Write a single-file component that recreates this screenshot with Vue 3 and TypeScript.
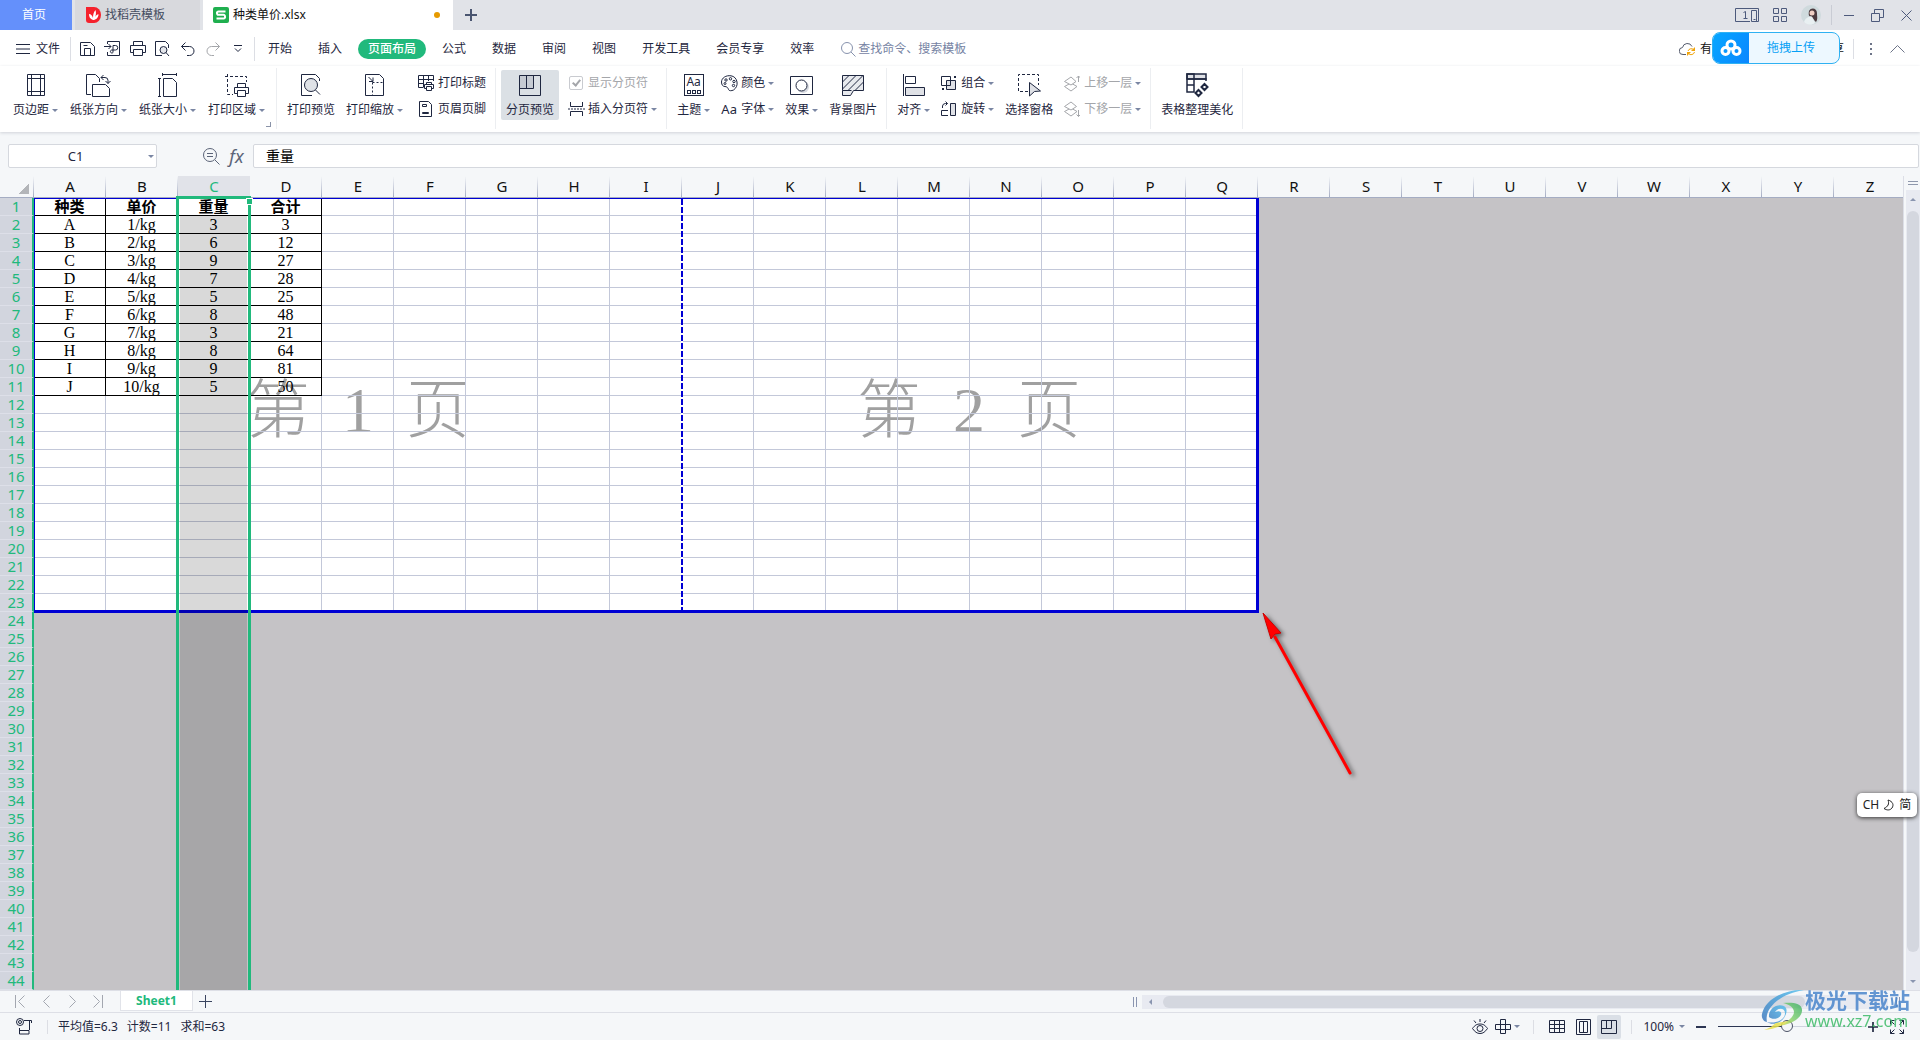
<script setup lang="ts">
import { h, ref } from 'vue'

interface IconDef { w: number; h: number; d: string }

const icons: Record<string, IconDef> = {
  docer: { w: 15, h: 16, d: '<path fill="#f5222d" stroke="none" d="M0 0h8a7 8 0 0 1 0 16H3a3 3 0 0 1-3-3z"/><path fill="#fff" stroke="none" d="M7 13C4 12 3 10 3 7c2 0 3.500 2 4 4 0-3 .5-6 2.500-8 .8 3 .5 5-.5 7 .8-1.500 2-2.500 3.500-2.800C12.500 10.500 10 13 7 13z"/>' },
  wps: { w: 16, h: 16, d: '<rect width="16" height="16" rx="2" fill="#1faf4f" stroke="none"/><path stroke="#fff" stroke-width="2" d="M12.500 4.500H5.500a1.500 1.500 0 0 0-1.500 1.500v0a1.500 1.500 0 0 0 1.500 1.800h5A1.500 1.500 0 0 1 12 9.500v0a1.500 1.500 0 0 1-1.500 2H3.500"/>' },
  plusBold: { w: 12, h: 12, d: '<path stroke-width="2" d="M6 0v12M0 6h12"/>' },
  plus: { w: 13, h: 13, d: '<path d="M6.500 0v13M0 6.500h13"/>' },
  devices: { w: 24, h: 14, d: '<path d="M15 13.500H.5V.5h23v13h-7v-11h5v11M8.500 10.500h4M10.500 10.500v-7l-2 1M18.500 11.500h2"/>' },
  tiles: { w: 14, h: 14, d: '<path d="M.5.5h5v5h-5zM8.500.5h5v5h-5zM.5 8.500h5v5h-5zM8.500 8.500h5v5h-5z"/>' },
  avatar: { w: 20, h: 20, d: '<circle cx="10" cy="10" r="10" fill="#cfdadd" stroke="none"/><path fill="#4b3a3e" stroke="none" d="M8 6c2-4 8-3 8 2 0 4 1 6-1 9-2-1-3-5-5-6-1 1-3 0-2-5z"/><circle cx="11" cy="8" r="2.500" fill="#efcfc4" stroke="none"/><path fill="#e9f0f2" stroke="none" d="M3 17c1-4 5-6 8-5l3 6c-4 3-8 2-11-1z"/>' },
  minimize: { w: 10, h: 12, d: '<path d="M0 6.500h10"/>' },
  restore: { w: 13, h: 13, d: '<path d="M.5 4.500h8v8h-8zM3.500 4V.5h9v8H9"/>' },
  close: { w: 11, h: 11, d: '<path d="M.5.5l10 10M10.500.5l-10 10"/>' },
  menu: { w: 14, h: 10, d: '<path d="M0 .5h14M0 5h14M0 9.500h14"/>' },
  save: { w: 16, h: 16, d: '<path d="M.5 1.500h10l4 4v9H.5zM4.500 14.500v-7h6v7M3.500 4.500h4"/>' },
  exportPdf: { w: 17, h: 16, d: '<path d="M3.500 3V.5h12v14h-12V11M0 5.500h7M4.500 3L7 5.500 4.500 8M9 11.500V4.500h2.500a2 2 0 0 1 0 4.500H8a1.500 1.500 0 1 0 1 2.500"/>' },
  print: { w: 16, h: 16, d: '<path d="M3.500 4.500v-4h9v4M3 11.500H.5v-7h15v7H13M3.500 8.500h9v6h-9z"/>' },
  preview: { w: 15, h: 16, d: '<path d="M13.500 7V3.500l-3-3h-10v14H7"/><circle cx="8.500" cy="9" r="3.500" fill="#e3e5ea"/><path d="M11 11.500l3 3.500"/>' },
  undo: { w: 14, h: 14, d: '<path d="M4.500.5L.5 4.500l4 4M.5 4.500h8a4.500 4.500 0 0 1 0 9H6"/>' },
  redo: { w: 14, h: 14, d: '<path d="M9.500.5l4 4-4 4M13.500 4.500h-8a4.500 4.500 0 0 0 0 9H8"/>' },
  more: { w: 8, h: 8, d: '<path d="M0 .5h8M1 3.500l3 3 3-3"/>' },
  search: { w: 15, h: 15, d: '<circle cx="6" cy="6" r="5.500"/><path d="M10 10l4.500 4.500"/>' },
  cloud: { w: 17, h: 14, d: '<path d="M7 12.500H4a3.500 3.500 0 0 1-.5-7 5 5 0 0 1 9.500-1" stroke="#555c6e"/><path stroke="#f0a30a" d="M9 9a3.500 3.500 0 0 1 6-1M15.500 10a3.500 3.500 0 0 1-6 1.500"/><path fill="#f0a30a" stroke="none" d="M16 5v4h-4zM8 14v-4h4z"/>' },
  netdisk: { w: 22, h: 18, d: '<g stroke="#fff" stroke-width="3"><circle cx="11" cy="6" r="4"/><circle cx="5.500" cy="12" r="3.500"/><circle cx="16.500" cy="12" r="3.500"/></g>' },
  dots: { w: 3, h: 12, d: '<path fill="currentColor" stroke="none" d="M0 0h2v2H0zM0 5h2v2H0zM0 10h2v2H0z"/>' },
  chevron: { w: 15, h: 8, d: '<path d="M.5 7.500l7-7 7 7"/>' },
  margins: { w: 18, h: 24, d: '<path d="M.5 1.500h17v21H.5zM4.500 1.500v21M13.500 1.500v21M.5 5.500h17M.5 18.500h17"/>' },
  orientation: { w: 25, h: 24, d: '<path d="M5 21.500H.5v-20h9l4 4V9M6.500 11.500h13l4 4v8h-17zM15 4.500h4a3 3 0 0 1 3 3v3M17.500 2L15 4.500 17.500 7M19.500 8l2.500 2.500L24.500 8"/>' },
  size: { w: 21, h: 24, d: '<path d="M2.500 5.500v18M1 5.500h3M1 23.500h3M5.500 1.500h14M5.500 0v3M19.500 0v3M6.500 5.500h9l4 4v14h-13z"/>' },
  printArea: { w: 24, h: 24, d: '<path stroke-dasharray="3 2" d="M0 3.500h21.500V9M2.500 1v20.500H8"/><path d="M12.500 14v-3.500h8V14M12 20.500H9.500v-6h14v6H21M12.500 17.500h8v6h-8z"/>' },
  bigPreview: { w: 20, h: 24, d: '<path d="M18.500 8V5.500l-4-4H.5v21H11"/><circle cx="10" cy="12" r="6.500" fill="#dfe2e7"/><path d="M14.500 17l4.500 4.500"/>' },
  scale: { w: 20, h: 24, d: '<path d="M.5 1.500h14l4 4v17H.5z"/><path stroke-dasharray="2 2" d="M7.500 9.500H18M7.500 9.500V22"/><path d="M3.500 4l4 4M8 4.500V8.500H4"/>' },
  printTitle: { w: 17, h: 16, d: '<path d="M5 12.500H.5V.5h15V6M.5 4.500h15M.5 8.500H6M5.500.5v12M10.500.5V6M8.500 10V7.500h5V10M8 13.500H6.500v-4h9v4H14M8.500 11.500h5v4h-5z"/>' },
  headerFooter: { w: 14, h: 16, d: '<path d="M.5.5h9l3 3v12H.5zM3.500 3.500h4v2h-4zM3.500 11.500h6v1h-6z"/>' },
  pageBreakView: { w: 22, h: 24, d: '<path fill="#c6cbd3" stroke="none" d="M0 2h14v14H0z"/><path d="M.5 2.500h21v20H.5zM14.500 2.500v13H.5M7.500 2.500v13"/>' },
  breakInsert: { w: 17, h: 16, d: '<path d="M2.500 1v4.500h12V1M2.500 15v-4.500h12V15"/><path stroke-dasharray="2 1" d="M0 8h17"/>' },
  effects: { w: 24, h: 24, d: '<path d="M.5 3.500h22v18H.5z"/><circle cx="13" cy="14" r="6" fill="#d5d8df" stroke="none"/><circle cx="11.500" cy="12.500" r="5.500" fill="#fff"/>' },
  background: { w: 22, h: 24, d: '<path fill="#e8eaee" d="M21.500 17.500v-15H.5v15h9M.5 17.500v5h8l3-5h10M.5 9L7 2.500M.5 16L14 2.500M6 17.500l15-15M13 17.500L21.500 9"/>' },
  palette: { w: 17, h: 17, d: '<path d="M10 .8C5 0 .5 3 .5 7c0 3 1.500 4.500 3.500 4.500S7 13 7.500 14.500s3 1.500 5 .5c3-2 4-5 3.500-8C15.500 3.500 13 1.200 10 .8z"/><circle cx="5" cy="5" r="1.200"/><circle cx="9.500" cy="3.800" r="1.200"/><circle cx="13" cy="6.500" r="1.200"/><circle cx="12.500" cy="10.500" r="1.200"/><circle cx="4" cy="8.500" r="1"/>' },
  align: { w: 22, h: 24, d: '<path d="M.5 1v22M2.500 3.500h10v7h-10z"/><path fill="#dfe1e6" d="M2.500 14.500h19v8h-19z"/>' },
  group: { w: 16, h: 16, d: '<path d="M.5 1.500h9v9h-9z"/><path fill="#dfe1e6" d="M5.500 5.500h9v9h-9z"/><path d="M5.500 10.500h4v-5"/><path fill="currentColor" stroke="none" d="M13 1h2v2h-2zM1 13h2v2H1z"/>' },
  rotate: { w: 16, h: 16, d: '<path fill="#dfe1e6" d="M9.500 2.500h5v12h-5z"/><path d="M7 14.500H.5v-5H7M1.500 7V5a3 3 0 0 1 3-2.500h2M4.500.5l2 2-2 2"/>' },
  selectPane: { w: 24, h: 24, d: '<path stroke-dasharray="3 2" d="M11 18.500H1.500v-17h20V12"/><path fill="#dfe1e6" d="M12.500 9.500l11 8.500-6 .5-5 4.500z"/>' },
  layerUp: { w: 16, h: 17, d: '<path fill="#fff" d="M.5 11.500L7 8l6 3.500L7 16z"/><path fill="#fff" d="M.5 6.500L7 2l5 4.500L7 10z"/><path d="M14.500 7V1M12.500 3l2-2 2 2"/>' },
  layerDown: { w: 16, h: 17, d: '<path fill="#fff" d="M.5 10.500L7 7l6 3.500L7 15z"/><path fill="#fff" d="M.5 5.500L7 1l5.500 4.500L7 9z"/><path d="M14.500 9v6.500M12.500 13.500l2 2 2-2"/>' },
  beautify: { w: 24, h: 25, d: '<g stroke-width="1.500"><path fill="#dfe1e6" d="M2 1h19v5H2z"/><path d="M2 1h7v18H2zM2 6h19v2M2 12h7"/><path fill="#fff" stroke-width="2" d="M19.500 11l3 3-3 3-3-3zM13.500 17l3 3-3 3-3-3z"/></g>' },
  zoomOut: { w: 17, h: 17, d: '<circle cx="7" cy="7" r="6.500"/><path d="M12 12l4.500 4.500M4 5.500h6M4 8.500h6"/>' },
  first: { w: 10, h: 13, d: '<path d="M.5 0v13M9.500.5l-6 6 6 6"/>' },
  prev: { w: 7, h: 13, d: '<path d="M6.500.5l-6 6 6 6"/>' },
  next: { w: 7, h: 13, d: '<path d="M.5.5l6 6-6 6"/>' },
  last: { w: 10, h: 13, d: '<path d="M9.500 0v13M.5.5l6 6-6 6"/>' },
  script: { w: 16, h: 17, d: '<circle cx="4" cy="4" r="3.500"/><circle cx="4" cy="4" r="1.500"/><path d="M8 2.500h7.500V5M13.500 3v9M3.500 10v2.500h9.500v3.500H3.500z"/>' },
  eye: { w: 16, h: 16, d: '<path d="M.5 9.500C3 6 5 5 8 5s5 1 7.500 4.500C13 13 11 14.500 8 14.500S3 13 .5 9.500zM8 0v3M2 1.500l2 2.500M14 1.500L12 4"/><circle cx="8" cy="9.500" r="3"/>' },
  cross: { w: 16, h: 16, d: '<path d="M5.500.5h5v14h-5zM.5 5.500h15v5H.5z"/>' },
  gridView: { w: 16, h: 14, d: '<path d="M.5.500h15v12H.5zM5.500.5v12M10.500.5v12M.5 4.500h15M.5 8.500h15"/>' },
  pageView: { w: 15, h: 16, d: '<path d="M.5.500h14v15H.5zM3.500 2.500h8v11h-8zM7.500 2.500v11"/>' },
  breakView: { w: 16, h: 14, d: '<path d="M.5.500h15v13H.5zM10.500.5v8H.5M5.500.5v8"/>' },
  fullscreen: { w: 14, h: 14, d: '<path d="M.5 4.500v-4h4M9.500.5h4v4M13.500 9.500v4h-4M4.500 13.500h-4v-4M.5.500l4 4M13.500.5l-4 4M13.500 13.500l-4-4M.5 13.500l4-4"/>' },
  moon: { w: 12, h: 12, d: '<path d="M5 1c1.500 4 0 6.500-4 8.500M5 1c5 1.500 6 5 4 8-2 2.500-5 2.500-8 .5"/>' },
}

const Icon = (props: { name: string }) => {
  const i = icons[props.name]
  return h('svg', {
    class: 'ic', width: i.w, height: i.h, viewBox: `0 0 ${i.w} ${i.h}`,
    fill: 'none', stroke: 'currentColor', 'aria-hidden': 'true', innerHTML: i.d,
  })
}
Icon.props = ['name']

const quickTools = ['save', 'exportPdf', 'print', 'preview', 'undo', 'redo']
const menus = ['开始', '插入', '页面布局', '公式', '数据', '审阅', '视图', '开发工具', '会员专享', '效率']
const activeMenu = ref('页面布局')

const columns = 'ABCDEFGHIJKLMNOPQRSTUVWXYZ'.split('')
const rowCount = 44
const pageRows = 23
const pageCols = 17
const data: string[][] = [
  ['种类', '单价', '重量', '合计'],
  ['A', '1/kg', '3', '3'],
  ['B', '2/kg', '6', '12'],
  ['C', '3/kg', '9', '27'],
  ['D', '4/kg', '7', '28'],
  ['E', '5/kg', '5', '25'],
  ['F', '6/kg', '8', '48'],
  ['G', '7/kg', '3', '21'],
  ['H', '8/kg', '8', '64'],
  ['I', '9/kg', '9', '81'],
  ['J', '10/kg', '5', '50'],
]
const cellText = (r: number, c: number) => data[r - 1]?.[c] ?? ''
const cellClass = (r: number, c: number) => ({
  filled: r <= data.length && c < 4,
  inpage: r <= pageRows && c < pageCols,
  bold: r === 1,
})

const cellName = ref('C1')
const formula = ref('重量')
const zoom = ref(100)
const showBreaks = ref(true)
</script>

<template>
  <div class="app">
    <header class="titlebar">
      <button class="tab home">首页</button>
      <button class="tab docer"><Icon name="docer" />找稻壳模板</button>
      <button class="tab file"><Icon name="wps" />种类单价.xlsx<i class="dirty"></i></button>
      <button class="newtab" aria-label="新建"><Icon name="plusBold" /></button>
      <div class="winctl">
        <button aria-label="设备"><Icon name="devices" /></button>
        <button aria-label="应用"><Icon name="tiles" /></button>
        <button aria-label="账户"><Icon name="avatar" /></button>
        <i class="vsep"></i>
        <button aria-label="最小化"><Icon name="minimize" /></button>
        <button aria-label="还原"><Icon name="restore" /></button>
        <button aria-label="关闭"><Icon name="close" /></button>
      </div>
    </header>

    <nav class="menubar">
      <button class="filemenu"><Icon name="menu" />文件</button>
      <div class="quick">
        <button v-for="q in quickTools" :key="q" :aria-label="q" :class="{ off: q === 'redo' }"><Icon :name="q" /></button>
        <button aria-label="更多"><Icon name="more" /></button>
      </div>
      <button v-for="m in menus" :key="m" class="menu" :class="{ active: m === activeMenu }" @click="activeMenu = m">{{ m }}</button>
      <label class="search"><Icon name="search" /><input type="text" placeholder="查找命令、搜索模板" /></label>
      <div class="menuright">
        <button class="sync"><Icon name="cloud" />有修改</button>
        <button class="share">分享</button>
        <i class="vsep"></i>
        <button aria-label="更多"><Icon name="dots" /></button>
        <button aria-label="收起"><Icon name="chevron" /></button>
      </div>
    </nav>

    <section class="ribbon">
      <div class="grp first">
        <button class="big"><Icon name="margins" /><span>页边距<i class="caret"></i></span></button>
        <button class="big"><Icon name="orientation" /><span>纸张方向<i class="caret"></i></span></button>
        <button class="big"><Icon name="size" /><span>纸张大小<i class="caret"></i></span></button>
        <button class="big"><Icon name="printArea" /><span>打印区域<i class="caret"></i></span></button>
        <i class="launcher"></i>
      </div>
      <div class="grp">
        <button class="big"><Icon name="bigPreview" /><span>打印预览</span></button>
        <button class="big"><Icon name="scale" /><span>打印缩放<i class="caret"></i></span></button>
        <div class="col lead">
          <button class="small"><b class="slot"><Icon name="printTitle" /></b>打印标题</button>
          <button class="small"><b class="slot"><Icon name="headerFooter" /></b>页眉页脚</button>
        </div>
      </div>
      <div class="grp tight">
        <button class="big pressed"><Icon name="pageBreakView" /><span>分页预览</span></button>
        <div class="col">
          <label class="small off"><b class="slot"><input v-model="showBreaks" type="checkbox" disabled /></b>显示分页符</label>
          <button class="small"><b class="slot"><Icon name="breakInsert" /></b>插入分页符<i class="caret"></i></button>
        </div>
      </div>
      <div class="grp">
        <button class="big"><b class="theme"><em>Aa</em><i></i><i></i><i></i></b><span>主题<i class="caret"></i></span></button>
        <div class="col">
          <button class="small"><b class="slot"><Icon name="palette" /></b>颜色<i class="caret"></i></button>
          <button class="small"><b class="slot aa">Aa</b>字体<i class="caret"></i></button>
        </div>
        <button class="big"><Icon name="effects" /><span>效果<i class="caret"></i></span></button>
        <button class="big"><Icon name="background" /><span>背景图片</span></button>
      </div>
      <div class="grp">
        <button class="big"><Icon name="align" /><span>对齐<i class="caret"></i></span></button>
        <div class="col">
          <button class="small"><b class="slot"><Icon name="group" /></b>组合<i class="caret"></i></button>
          <button class="small"><b class="slot"><Icon name="rotate" /></b>旋转<i class="caret"></i></button>
        </div>
        <button class="big"><Icon name="selectPane" /><span>选择窗格</span></button>
        <div class="col">
          <button class="small off"><b class="slot"><Icon name="layerUp" /></b>上移一层<i class="caret"></i></button>
          <button class="small off"><b class="slot"><Icon name="layerDown" /></b>下移一层<i class="caret"></i></button>
        </div>
      </div>
      <div class="grp">
        <button class="big"><Icon name="beautify" /><span>表格整理美化</span></button>
      </div>
    </section>

    <section class="formulabar">
      <div class="namebox">
        <input v-model="cellName" type="text" aria-label="名称框" />
        <button aria-label="展开"><i class="caret"></i></button>
      </div>
      <button class="fzoom" aria-label="缩放"><Icon name="zoomOut" /></button>
      <button class="fx">fx</button>
      <input v-model="formula" class="formula" type="text" aria-label="编辑栏" />
    </section>

    <main class="work">
      <div class="viewport">
        <div class="paper">
          <p class="mark one"><span>第</span><span>1</span><span>页</span></p>
          <p class="mark two"><span>第</span><span>2</span><span>页</span></p>
        </div>
        <table class="sheet">
          <colgroup>
            <col class="c0" />
            <col v-for="c in columns" :key="c" class="cn" />
          </colgroup>
          <thead>
            <tr>
              <th class="corner"></th>
              <th v-for="c in columns" :key="c" scope="col" :class="{ sel: c === 'C' }">{{ c }}</th>
            </tr>
          </thead>
          <tbody>
            <tr v-for="r in rowCount" :key="r">
              <th scope="row">{{ r }}</th>
              <td v-for="(c, ci) in columns" :key="c" :class="cellClass(r, ci)">{{ cellText(r, ci) }}</td>
            </tr>
          </tbody>
        </table>
        <div class="frame"><i class="pagebreak"></i></div>
        <div class="selection"><i class="handle"></i></div>
        <svg class="arrow" width="110" height="180" viewBox="0 0 110 180" aria-hidden="true">
          <path d="M90 163L15 27" stroke="#f00" stroke-width="3" stroke-linecap="round" />
          <path d="M3 3L21 23 15 24 11 29z" fill="#f00" stroke="#c00" />
        </svg>
      </div>
      <div class="vscroll">
        <i class="split"></i>
        <div class="vtrack"><i class="up"></i><i class="vthumb"></i><i class="down"></i></div>
      </div>
    </main>

    <section class="sheetbar">
      <div class="sheetnav">
        <button aria-label="第一个"><Icon name="first" /></button>
        <button aria-label="上一个"><Icon name="prev" /></button>
        <button aria-label="下一个"><Icon name="next" /></button>
        <button aria-label="最后一个"><Icon name="last" /></button>
      </div>
      <button class="sheettab">Sheet1</button>
      <button class="addsheet" aria-label="新建工作表"><Icon name="plus" /></button>
      <div class="hscroll">
        <i class="grip"></i>
        <div class="htrack"><i class="left"></i><i class="hthumb"></i></div>
        <i class="grip"></i>
      </div>
    </section>

    <footer class="status">
      <button class="macro" aria-label="脚本"><Icon name="script" /></button>
      <i class="vsep"></i>
      <p class="stats"><span>平均值=6.3</span><span>计数=11</span><span>求和=63</span></p>
      <div class="views">
        <button aria-label="护眼"><Icon name="eye" /></button>
        <button aria-label="阅读"><Icon name="cross" /><i class="caret"></i></button>
        <i class="vsep"></i>
        <button class="view" aria-label="普通视图"><Icon name="gridView" /></button>
        <button class="view" aria-label="页面视图"><Icon name="pageView" /></button>
        <button class="view on" aria-label="分页预览"><Icon name="breakView" /></button>
        <i class="vsep"></i>
        <button class="percent">{{ zoom }}%<i class="caret"></i></button>
        <button class="minus" aria-label="缩小"><i></i></button>
        <input v-model.number="zoom" class="zoom" type="range" min="10" max="200" aria-label="显示比例" />
        <button class="zplus" aria-label="放大"><Icon name="plusBold" /></button>
        <button aria-label="全屏"><Icon name="fullscreen" /></button>
      </div>
    </footer>

    <button class="upload"><b><Icon name="netdisk" /></b><span>拖拽上传</span></button>
    <div class="ime">CH<Icon name="moon" />简</div>
    <div class="brand">
      <svg width="44" height="42" viewBox="0 0 44 42" aria-hidden="true">
        <defs>
          <linearGradient id="bl" x1="0" y1="1" x2="1" y2="0"><stop offset="0" stop-color="#3d78bd" /><stop offset="1" stop-color="#55c2f0" /></linearGradient>
          <linearGradient id="gr" x1="0" y1="1" x2="1" y2="0"><stop offset="0" stop-color="#e8e04a" /><stop offset=".5" stop-color="#7fcf72" /><stop offset="1" stop-color="#3fb06a" /></linearGradient>
        </defs>
        <path d="M43 1C24 0 4 10 1 25c-1 4 2 8 5 8C3 20 18 5 43 1z" fill="url(#bl)" />
        <path d="M6 33c7 2 18-1 18-9 0-5-7-6-10-1 5-2 7 0 6 3-2 4-9 5-12 2-1-8 8-14 15-11 5 3 2 11-3 15-4 3-10 4-14 1z" fill="url(#bl)" />
        <path d="M22 14c9-1 20 0 19 8-1 9-14 14-24 15 7-3 16-8 16-14 0-5-6-8-11-9z" fill="url(#gr)" />
        <path d="M27 32c-5 5-14 8-24 9 6-2 8-4 12-7z" fill="#e6e04e" />
      </svg>
      <div><strong>极光下载站</strong><span>www.xz7.com</span></div>
    </div>
  </div>
</template>

<style>
body { margin: 0; }
</style>

<style scoped>
.app {
  position: relative;
  display: flex;
  flex-direction: column;
  min-height: 100vh;
  overflow: hidden;
  background: #f5f7f9;
  color: #1f2740;
  font: 12px/16px "Noto Sans", "Noto Sans CJK SC", sans-serif;
}
button, input { font: inherit; color: inherit; margin: 0; padding: 0; border: 0; background: none; outline: none; }
button { display: flex; align-items: center; justify-content: center; white-space: nowrap; }
p { margin: 0; }
i, em { font-style: normal; }
b { font-weight: 400; }
.ic { display: block; flex: none; }
.caret { flex: none; width: 0; height: 0; border: 3px solid transparent; border-top-color: #7a86a3; border-bottom: 0; margin-left: 3px; }
.vsep { flex: none; width: 1px; background: #dcdee4; }

.titlebar { display: flex; height: 30px; background: #e1e3e8; }
.tab { height: 30px; flex: none; }
.home { width: 72px; background: #6490fb; color: #fff; padding-right: 4px; }
.docer { width: 125px; margin-left: 3px; background: #d8d9dd; color: #444c60; justify-content: flex-start; gap: 4px; padding: 0 11px; }
.file { width: 250px; margin-left: 3px; background: #fff; color: #111; justify-content: flex-start; gap: 4px; padding: 0 13px 0 10px; }
.dirty { width: 6px; height: 6px; border-radius: 3px; background: #e69a00; margin-left: auto; }
.newtab { width: 36px; color: #4a5570; }
.winctl { margin-left: auto; display: flex; align-items: center; color: #4d5a7c; padding-right: 8px; gap: 14px; }
.winctl .vsep { height: 20px; background: #c9ccd4; margin: 0 -2px 0 -4px; }
.winctl button:nth-last-child(-n+2) { margin-left: 3px; }

.menubar { display: flex; align-items: center; height: 36px; box-sizing: border-box; padding-top: 2px; background: #fff; }
.filemenu { gap: 6px; padding: 0 10px 0 16px; height: 24px; border-right: 1px solid #dcdee4; }
.quick { display: flex; padding: 0 4px; border-right: 1px solid #dcdee4; height: 24px; }
.quick button { width: 25px; }
.off { color: #a4a6aa; }
.menu { height: 20px; margin: 0 3px; padding: 0 10px; border-radius: 10px; }
.menu.active { background: #21b97c; color: #fff; font-weight: 500; }
.search { display: flex; align-items: center; gap: 2px; margin-left: 14px; color: #8792ad; }
.search input { width: 120px; }
.search input::placeholder { color: #7683a3; opacity: 1; }
.menuright { margin-left: auto; display: flex; align-items: center; padding-right: 15px; color: #111; }
.sync { gap: 4px; }
.share { margin-left: 84px; }
.menuright .vsep { height: 20px; margin: 0 16px 0 9px; }
.menuright .vsep ~ button { color: #6d7488; margin-right: 17px; }
.menuright .vsep ~ button:last-child { margin-right: 0; }

.ribbon { display: flex; height: 66px; background: #fff; box-shadow: 0 1px 3px #d0d3d9; position: relative; }
.grp { position: relative; display: flex; gap: 11px; padding: 0 9px 0 10px; border-right: 1px solid #eceef1; height: 61px; margin-top: 2px; }
.grp.first { gap: 12px; padding: 0 11px 0 13px; }
.grp.tight { gap: 9px; padding-left: 5px; }
.big { flex-direction: column; justify-content: flex-start; height: 50px; margin-top: 2px; padding-top: 3px; gap: 4px; }
.big span { display: flex; align-items: center; height: 16px; margin-top: auto; margin-bottom: 2px; }
.pressed { width: 58px; background: #dbe0e5; border-radius: 2px; }
.col { display: flex; flex-direction: column; margin-top: 7px; gap: 10px; }
.col.lead { margin-left: 4px; }
.small { display: flex; align-items: center; height: 16px; justify-content: flex-start; white-space: nowrap; }
.slot { display: flex; width: 16px; margin-right: 4px; justify-content: center; flex: none; }
.aa { font-size: 13px; }
.launcher { position: absolute; right: 5px; bottom: 2px; width: 4px; height: 4px; border: solid #8a93a8; border-width: 0 1px 1px 0; }
input[type="checkbox"] { appearance: none; width: 14px; height: 14px; box-sizing: border-box; border: 1px solid #c9cbd0; border-radius: 2px; display: flex; justify-content: center; }
input[type="checkbox"]:checked::after { content: ""; width: 3px; height: 6px; margin-top: 1px; border: solid #a4a6aa; border-width: 0 2px 2px 0; transform: rotate(40deg); }
.theme { display: flex; flex-wrap: wrap; justify-content: center; gap: 0 1px; width: 18px; height: 20px; margin-top: 1px; border: 1px solid #1f2740; }
.theme em { width: 18px; line-height: 14px; text-align: center; }
.theme i { width: 2px; height: 2px; border: 1px solid #1f2740; }

.formulabar { display: flex; align-items: center; height: 44px; box-sizing: border-box; padding-top: 4px; }
.namebox { display: flex; align-items: center; width: 147px; height: 22px; margin-left: 8px; border: 1px solid #d5d8de; border-radius: 2px; background: #fff; }
.namebox input { flex: 1; min-width: 0; text-align: center; padding-right: 4px; font-size: 13px; }
.namebox button { width: 10px; height: 20px; }
.namebox .caret { margin: 0; }
.fzoom { margin-left: 46px; color: #5b6478; }
.fx { width: 17px; margin: 0 8px 0 8px; font: italic 18px/20px "Noto Sans", sans-serif; color: #5b6478; }
.formula { flex: 1; height: 20px; border: 1px solid #d5d8de; border-radius: 2px; background: #fff; padding: 0 12px 2px; margin-right: 1px; font-size: 14px; color: #000; }

.work { display: flex; flex: 1; }
.viewport { position: relative; flex: 1; min-width: 0; overflow: hidden; background: #c5c3c6; }
.sheet { position: relative; table-layout: fixed; width: 1906px; border-collapse: separate; border-spacing: 0; }
.c0 { width: 34px; }
.cn { width: 72px; }
.sheet th, .sheet td { box-sizing: border-box; padding: 0; text-align: center; font-weight: 400; white-space: nowrap; }
.sheet thead th {
  height: 22px; padding-bottom: 1px; font-size: 15px; line-height: 20px; color: #111;
  border-bottom: 1px solid #a5adc3;
  background: linear-gradient(#f5f7f9, #a5adc3) right / 1px 100% no-repeat #f5f7f9;
}
.sheet thead th.sel { background: #e1e3e9; color: #21b97c; }
.sheet thead .corner { background: linear-gradient(135deg, transparent 50%, #b3b5b9 50%) 18px 7px / 11px 11px no-repeat, linear-gradient(#f5f7f9, #a5adc3) right / 1px 100% no-repeat #f5f7f9; }
.sheet tbody th { height: 18px; padding-bottom: 1px; line-height: 16px; font-size: 15px; color: #21b97c; background: #d2d5de; border-right: 2px solid #21b97c; border-bottom: 1px solid #dddfe8; }
.sheet tbody td { height: 18px; padding-top: 1px; line-height: 16px; color: #000; border: solid transparent; border-width: 0 1px 1px 0; font-family: "Liberation Serif", "Noto Sans CJK SC", serif; font-size: 16px; }
.sheet td.inpage { border-color: #c3c8d9; }
.sheet td.filled { border-color: #000; }
.sheet td.filled.bold { font-size: 15px; font-weight: 700; }

.paper { position: absolute; left: 34px; top: 22px; width: 1225px; height: 415px; box-sizing: border-box; padding-right: 3px; background: #fff; display: flex; align-items: center; }
.mark { display: flex; justify-content: center; gap: 32px; padding-top: 10px; font: 300 64px/72px "Liberation Serif", "Noto Sans CJK SC", serif; color: #a0a0a0; }
.mark.one { flex: 0 0 648px; }
.mark.two { flex: 1; }
.frame { position: absolute; left: 34px; top: 22px; width: 1221px; height: 411px; border: solid #0000d4; border-width: 1px 3px 3px 1px; }
.pagebreak { position: absolute; left: 646px; top: 0; bottom: 0; width: 2px; background: repeating-linear-gradient(#0000d4 0 6px, #fff 6px 8px); }
.selection { position: absolute; left: 176px; top: 20px; bottom: 0; width: 69px; border: solid #21b97c; border-width: 3px 3px 0; }
.selection::before { content: ""; position: absolute; left: 1px; right: 1px; top: 17px; bottom: 0; background: rgba(0, 0, 0, .15); }
.handle { position: absolute; right: -5px; top: -1px; width: 5px; height: 5px; border: 1px solid #fff; background: #21b97c; }
.arrow { position: absolute; left: 1260px; top: 434px; fill: none; filter: drop-shadow(3px 2px 2px rgba(0, 0, 0, .5)); }

.vscroll { flex: none; display: flex; flex-direction: column; width: 14px; border-left: 1px solid #dcdee6; padding-left: 2px; background: #f5f7f9; }
.split { width: 10px; height: 2px; border: solid #8f98ac; border-width: 1px 0; margin: 5px 2px; }
.vtrack { flex: 1; display: flex; flex-direction: column; align-items: center; background: #e8eaf1; }
.up, .down { width: 0; height: 0; border: 3px solid transparent; }
.up { border-top: 0; border-bottom-color: #8a95b0; margin: 8px 0 10px; }
.down { border-bottom: 0; border-top-color: #8a95b0; margin: 28px 0 7px; }
.vthumb { flex: 1; width: 12px; border-radius: 6px; background: #d4d7df; }

.sheetbar { display: flex; height: 22px; border-top: 1px solid #dddfe6; box-sizing: border-box; }
.sheetnav { display: flex; padding: 0 9px 0 7px; color: #a3a7b0; }
.sheetnav button { width: 26px; }
.sheettab { width: 73px; height: 20px; background: #fff; border: solid #e1e3e9; border-width: 0 1px 1px; box-sizing: border-box; color: #21b97c; font-weight: 700; }
.addsheet { width: 24px; color: #3a4560; }
.hscroll { margin-left: auto; flex: 0 0 41%; box-sizing: border-box; display: flex; align-items: center; padding-right: 20px; }
.grip { width: 2px; height: 10px; border: solid #8a95b0; border-width: 0 1px; }
.htrack { flex: 1; display: flex; align-items: center; height: 14px; margin: 0 8px 0 5px; background: #e8eaf1; }
.left { border: 3px solid transparent; border-left: 0; border-right-color: #8a95b0; margin: 0 11px 0 7px; }
.hthumb { width: 86%; height: 12px; border-radius: 6px; background: #d4d7df; }

.status { display: flex; align-items: center; height: 28px; box-sizing: border-box; border-top: 1px solid #dddfe6; }
.status .vsep { height: 14px; }
.macro { padding: 0 15px 0 16px; }
.stats { display: flex; gap: 9px; padding-left: 10px; }
.views { margin-left: auto; display: flex; align-items: center; padding-right: 16px; gap: 7px; }
.views .vsep { margin: 0 4px 0 3px; }
.views .vsep:first-of-type { margin-left: 6px; }
.view { width: 24px; height: 24px; margin-right: -5px; }
.view.on { background: #dadfe6; border-radius: 2px; margin-right: 0; }
.percent { margin-right: 4px; }
.percent .caret { margin-left: 5px; }
.minus i { width: 10px; height: 2px; background: #2c3653; }
.zoom { appearance: none; width: 146px; height: 16px; margin: 0 0 0 5px; }
.zoom::-webkit-slider-runnable-track { height: 1px; background: linear-gradient(90deg, #2c3653 47%, #cfd3de 47%); }
.zoom::-webkit-slider-thumb { appearance: none; width: 12px; height: 12px; margin-top: -6px; border: 1px solid #4b5266; border-radius: 6px; background: #f5f7f9; box-sizing: border-box; }
.zplus .ic { width: 10px; height: 10px; }
.zplus { margin: 0 5px 0 -3px; }

.upload { position: absolute; right: 80px; top: 32px; width: 128px; height: 32px; border: 1px solid #2fb1f2; border-radius: 8px; background: #edf8ff; color: #06a0f5; overflow: hidden; }
.upload b { display: flex; align-items: center; justify-content: center; width: 36px; height: 32px; background: linear-gradient(120deg, #06a7ff, #0b86ff); }
.upload span { flex: 1; padding-right: 6px; text-align: center; }
.ime { position: absolute; right: 3px; bottom: 223px; display: flex; align-items: center; justify-content: center; gap: 4px; width: 60px; height: 24px; border-radius: 5px; background: #fff; box-shadow: 0 1px 4px #333; color: #222; }
.brand { position: absolute; right: 10px; bottom: 9px; display: flex; opacity: .85; pointer-events: none; }
.brand div { display: flex; flex-direction: column; }
.brand strong { font-size: 21px; line-height: 23px; color: #4a86cc; }
.brand span { font-size: 16px; line-height: 19px; color: #3dbb68; }
</style>
